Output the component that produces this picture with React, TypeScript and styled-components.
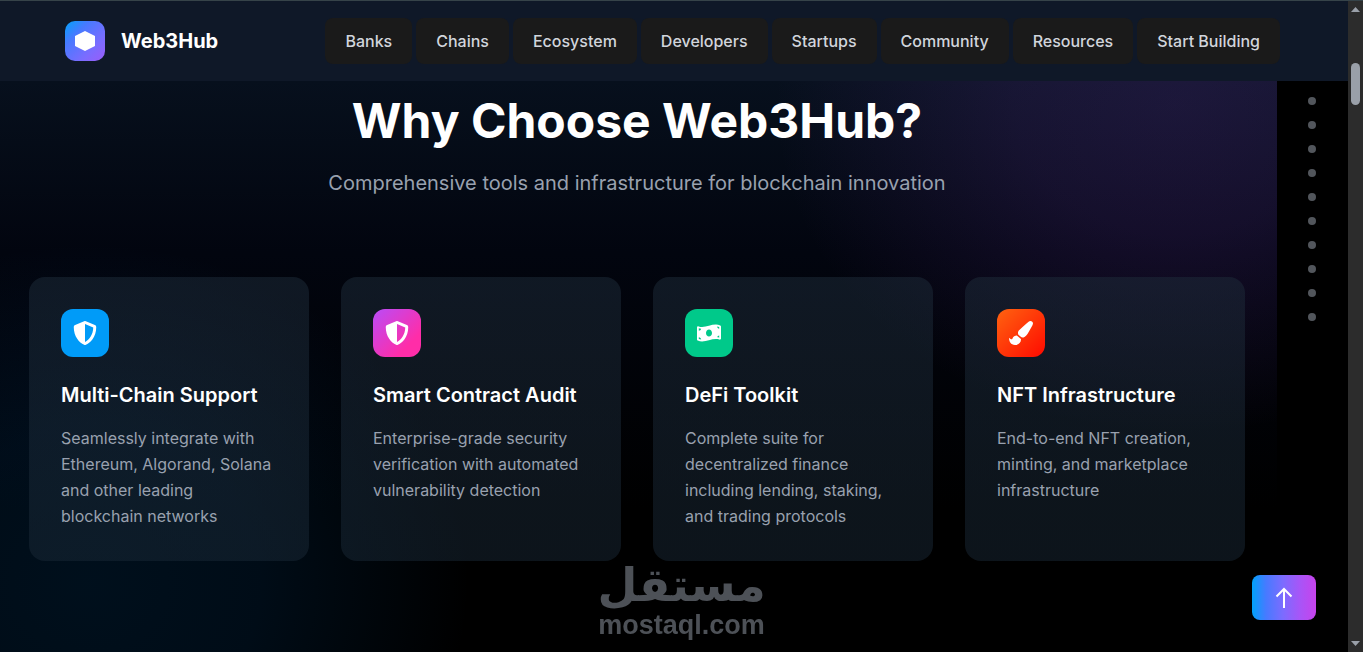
import React from "react";
import styled, { createGlobalStyle } from "styled-components";
import { FaShieldAlt, FaMoneyBillWave, FaPaintBrush } from "react-icons/fa";
import type { IconType } from "react-icons";

const GlobalStyle = createGlobalStyle`
  * { box-sizing: border-box; }
  body {
    margin: 0;
    background: #000;
    color: #fff;
    font-family: Inter, "Liberation Sans", sans-serif;
    overflow: hidden;
  }
  h1, h2, h3, p { margin: 0; }
`;

const Shell = styled.div`
  display: flex;
  height: 100vh;
`;

const Page = styled.div`
  flex: 1;
  min-width: 0;
  display: flex;
  flex-direction: column;
`;

const Header = styled.header`
  display: flex;
  flex-shrink: 0;
  align-items: center;
  justify-content: space-between;
  padding: 17px 68px 17px 65px;
  border-top: 1px solid #364349;
  background: #0f1828;
`;

const Brand = styled.a`
  display: flex;
  align-items: center;
  gap: 16px;
  color: #fff;
  font-size: 20px;
  font-weight: 700;
  line-height: 28px;
  text-decoration: none;
`;

const BrandMark = styled.span`
  display: grid;
  place-items: center;
  width: 40px;
  height: 40px;
  border-radius: 10px;
  background: linear-gradient(135deg, #00a2fb 0%, #477aff 30%, #7b6cff 70%, #9a5cf9 100%);
`;

const Nav = styled.nav`
  display: flex;
  gap: 4px;
`;

const NavButton = styled.button`
  height: 46px;
  padding: 0 20px;
  border: 0;
  border-radius: 8px;
  background: #1a1a1a;
  color: #d1d5dc;
  font: 500 16px/24px Inter, "Liberation Sans", sans-serif;
  white-space: nowrap;
`;

const Body = styled.div`
  flex: 1;
  min-height: 0;
  display: flex;
`;

const Main = styled.main`
  flex: 1;
  min-width: 0;
  padding: 12px 32px 0 29px;
  background:
    radial-gradient(ellipse 400px 330px at 92% 4%, rgba(122, 60, 190, 0.19), rgba(122, 60, 190, 0.15) 40%, transparent),
    radial-gradient(ellipse 380px 340px at 7% 88%, rgba(0, 104, 190, 0.15), rgba(0, 100, 190, 0.12) 45%, transparent),
    linear-gradient(180deg, #07101d 0%, #02050f 30%, #000 75%);
`;

const Heading = styled.h1`
  font-size: 48px;
  font-weight: 700;
  line-height: 56px;
  text-align: center;
`;

const Lead = styled.p`
  margin-top: 20px;
  color: #99a1af;
  font-size: 20px;
  line-height: 28px;
  text-align: center;
`;

const CardGrid = styled.div`
  display: grid;
  grid-template-columns: repeat(4, 1fr);
  gap: 32px;
  margin-top: 80px;
`;

const Card = styled.article`
  padding: 32px;
  border-radius: 16px;
  background: linear-gradient(180deg, rgba(30, 44, 58, 0.5), rgba(25, 40, 54, 0.5));
`;

const CardIcon = styled.div<{ $fill: string }>`
  display: grid;
  place-items: center;
  width: 48px;
  height: 48px;
  border-radius: 12px;
  background: ${(p) => p.$fill};
`;

const CardTitle = styled.h3`
  margin-top: 24px;
  font-size: 20px;
  font-weight: 600;
  line-height: 28px;
`;

const CardText = styled.p`
  margin-top: 16px;
  color: #99a1af;
  font-size: 16px;
  line-height: 26px;
`;

const Rail = styled.nav`
  display: flex;
  flex-direction: column;
  align-items: flex-end;
  gap: 16px;
  width: 71px;
  padding: 16px 32px 0 0;
`;

const Dot = styled.button`
  width: 8px;
  height: 8px;
  padding: 0;
  border: 0;
  border-radius: 50%;
  background: #52565c;
`;

const ScrollTrack = styled.div`
  display: flex;
  flex-direction: column;
  align-items: center;
  width: 15px;
  padding: 6px 0;
  border-top: 1px solid #364349;
  background: #2c2c2c;
`;

const ScrollThumb = styled.div`
  width: 9px;
  height: 42px;
  margin: 51px 0 auto;
  border-radius: 5px;
  background: #9aa0a9;
`;

const Watermark = styled.div`
  position: fixed;
  left: 50%;
  bottom: 13px;
  transform: translateX(-50%);
  display: flex;
  flex-direction: column;
  align-items: center;
  color: #4d5157;
`;

const WatermarkName = styled.span`
  font: 700 46px/52px "DejaVu Sans", sans-serif;
`;

const WatermarkSite = styled.span`
  font: 700 27px/28px "Liberation Sans", sans-serif;
`;

const TopButton = styled.button`
  position: fixed;
  right: 47px;
  bottom: 32px;
  display: grid;
  place-items: center;
  width: 64px;
  height: 45px;
  border: 0;
  border-radius: 8px;
  background: linear-gradient(90deg, #00a2fb 0%, #477aff 22%, #7b6cff 48%, #a855f7 75%, #c743ec 100%);
  color: #fff;
`;

const links = ["Banks", "Chains", "Ecosystem", "Developers", "Startups", "Community", "Resources", "Start Building"];

const features: { title: string; text: string; fill: string; Icon: IconType }[] = [
  {
    title: "Multi-Chain Support",
    text: "Seamlessly integrate with Ethereum, Algorand, Solana and other leading blockchain networks",
    fill: "#009bf8",
    Icon: FaShieldAlt,
  },
  {
    title: "Smart Contract Audit",
    text: "Enterprise-grade security verification with automated vulnerability detection",
    fill: "linear-gradient(135deg, #b94cf8, #ff2da8 75%)",
    Icon: FaShieldAlt,
  },
  {
    title: "DeFi Toolkit",
    text: "Complete suite for decentralized finance including lending, staking, and trading protocols",
    fill: "#00c98a",
    Icon: FaMoneyBillWave,
  },
  {
    title: "NFT Infrastructure",
    text: "End-to-end NFT creation, minting, and marketplace infrastructure",
    fill: "linear-gradient(135deg, #ff6310, #ff0a00)",
    Icon: FaPaintBrush,
  },
];

const sections = Array.from({ length: 10 }, (_, i) => `Go to section ${i + 1}`);

export default function App() {
  return (
    <Shell>
      <GlobalStyle />
      <Page>
        <Header>
          <Brand href="#">
            <BrandMark>
              <svg width="20" height="20" viewBox="0 0 20 20" aria-hidden="true">
                <polygon points="10,0 20,5 20,15 10,20 0,15 0,5" fill="#fff" />
              </svg>
            </BrandMark>
            Web3Hub
          </Brand>
          <Nav>
            {links.map((l) => (
              <NavButton key={l}>{l}</NavButton>
            ))}
          </Nav>
        </Header>
        <Body>
          <Main>
            <Heading>Why Choose Web3Hub?</Heading>
            <Lead>Comprehensive tools and infrastructure for blockchain innovation</Lead>
            <CardGrid>
              {features.map(({ title, text, fill, Icon }) => (
                <Card key={title}>
                  <CardIcon $fill={fill}>
                    <Icon size={24} />
                  </CardIcon>
                  <CardTitle>{title}</CardTitle>
                  <CardText>{text}</CardText>
                </Card>
              ))}
            </CardGrid>
          </Main>
          <Rail aria-label="Sections">
            {sections.map((s) => (
              <Dot key={s} aria-label={s} />
            ))}
          </Rail>
        </Body>
      </Page>
      <ScrollTrack aria-hidden="true">
        <svg width="9" height="5" viewBox="0 0 9 5">
          <path d="M4.5 0L9 5H0z" fill="#9aa0a9" />
        </svg>
        <ScrollThumb />
        <svg width="9" height="5" viewBox="0 0 9 5">
          <path d="M4.5 5L9 0H0z" fill="#9aa0a9" />
        </svg>
      </ScrollTrack>
      <Watermark>
        <WatermarkName lang="ar" dir="rtl">مستقل</WatermarkName>
        <WatermarkSite>mostaql.com</WatermarkSite>
      </Watermark>
      <TopButton aria-label="Back to top">
        <svg width="18" height="22" viewBox="0 0 18 22" fill="none" stroke="currentColor" strokeWidth="2" aria-hidden="true">
          <path d="M9 21V2M1.5 9.500L9 2l7.500 7.500" />
        </svg>
      </TopButton>
    </Shell>
  );
}
